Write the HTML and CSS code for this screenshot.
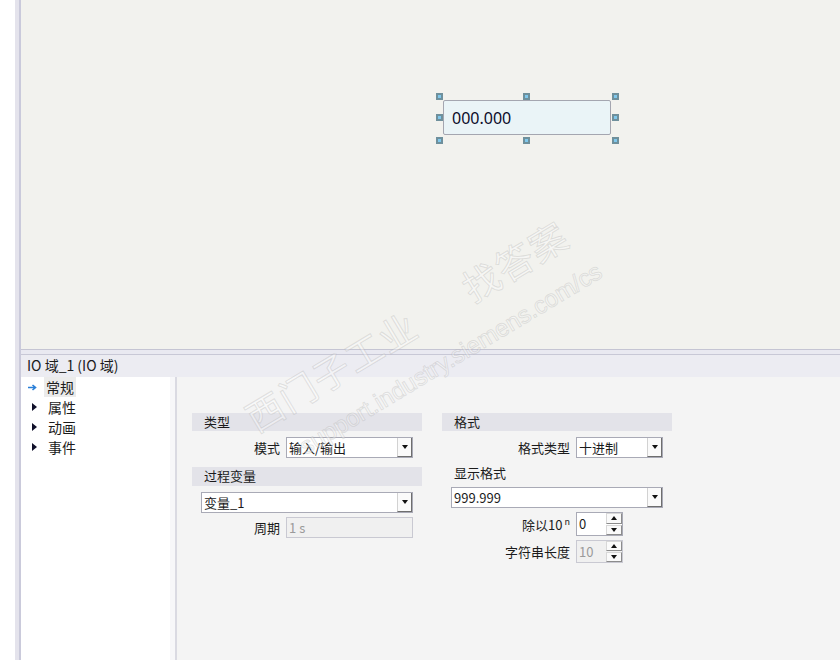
FILE: index.html
```html
<!DOCTYPE html>
<html lang="zh-CN">
<head>
    <meta charset="UTF-8">
    <title>IO 域_1</title>
    <link rel="stylesheet" href="styles.css">
</head>
<body>
    <div class="app">
        <div class="gutter"></div>
        <div class="splitter"></div>
        <div class="main">
            <div class="canvas">
                <div class="io-field">
                    <span class="io-text">000.000</span>
                    <i class="handle h-tl"></i>
                    <i class="handle h-tm"></i>
                    <i class="handle h-tr"></i>
                    <i class="handle h-ml"></i>
                    <i class="handle h-mr"></i>
                    <i class="handle h-bl"></i>
                    <i class="handle h-bm"></i>
                    <i class="handle h-br"></i>
                </div>
            </div>
            <div class="hsplit"></div>
            <div class="inspector">
                <div class="insp-title">IO 域_1 (IO 域)</div>
                <div class="insp-body">
                    <ul class="tree">
                        <li class="active">
                            <svg class="arrow" width="9" height="7" viewBox="0 0 9 7"><path d="M0 3.5H7M4.5 1L7.5 3.5L4.5 6" stroke="#2a7fd8" stroke-width="1.6" fill="none"/></svg>
                            <span class="tree-text">常规</span>
                        </li>
                        <li><span class="tri"></span><span class="tree-text">属性</span></li>
                        <li><span class="tri"></span><span class="tree-text">动画</span></li>
                        <li><span class="tri"></span><span class="tree-text">事件</span></li>
                    </ul>
                    <div class="tree-sep"></div>
                    <div class="props">
                        <div class="col col-left">
                            <div class="bar">类型</div>
                            <div class="row">
                                <span class="lbl">模式</span>
                                <div class="combo w-mode">
                                    <span class="val">输入/输出</span>
                                    <span class="dd"><b></b></span>
                                </div>
                            </div>
                            <div class="bar bar-2">过程变量</div>
                            <div class="combo wide">
                                <span class="val">变量_1</span>
                                <span class="dd"><b></b></span>
                            </div>
                            <div class="row row-tight">
                                <span class="lbl">周期</span>
                                <div class="textbox disabled w-mode">1 s</div>
                            </div>
                        </div>
                        <div class="col col-right">
                            <div class="bar">格式</div>
                            <div class="row">
                                <span class="lbl">格式类型</span>
                                <div class="combo w-fmt">
                                    <span class="val">十进制</span>
                                    <span class="dd"><b></b></span>
                                </div>
                            </div>
                            <div class="sub-label">显示格式</div>
                            <div class="combo wide">
                                <span class="val">999.999</span>
                                <span class="dd"><b></b></span>
                            </div>
                            <div class="row row-tight spin-row">
                                <span class="lbl">除以10<sup>n</sup></span>
                                <div class="spin">
                                    <span class="val">0</span>
                                    <span class="spin-btns"><span class="up"><b></b></span><span class="down"><b></b></span></span>
                                </div>
                            </div>
                            <div class="row row-tight spin-row">
                                <span class="lbl">字符串长度</span>
                                <div class="spin disabled">
                                    <span class="val">10</span>
                                    <span class="spin-btns"><span class="up"><b></b></span><span class="down"><b></b></span></span>
                                </div>
                            </div>
                        </div>
                    </div>
                </div>
            </div>
        </div>
        <div class="watermark">
            <div class="wm-cn">西门子工业<span class="wm-gap">找答案</span></div>
            <div class="wm-url">support.industry.siemens.com/cs</div>
        </div>
    </div>
</body>
</html>
```

FILE: styles.css
```css
body {
    margin: 0;
    font-family: "Noto Sans CJK SC", "Noto Sans", sans-serif;
    color: #1b1b1b;
    background-color: #fff;
    overflow: hidden;
}
.app {
    position: relative;
    display: flex;
    width: 840px;
    height: 660px;
    overflow: hidden;
}
.gutter {
    width: 15px;
    background-color: #fff;
}
.splitter {
    width: 4px;
    background-color: #e4e3ec;
    border-right: 2px solid #cacadb;
}
.main {
    flex: 1;
    display: flex;
    flex-direction: column;
}
.canvas {
    position: relative;
    height: 349px;
    background-color: #f2f2ee;
}
.io-field {
    position: absolute;
    left: 422px;
    top: 100px;
    width: 166px;
    height: 33px;
    background-color: #eaf4f7;
    border: 1px solid #a4a6b0;
    border-radius: 2px;
    display: flex;
    align-items: center;
}
.io-text {
    padding-left: 8px;
    font-family: "Noto Sans", sans-serif;
    font-size: 16px;
    color: #0c0c2a;
}
.handle {
    position: absolute;
    width: 3px;
    height: 3px;
    background-color: #80c8ec;
    border: 2px solid #6f909c;
}
.h-tl { left: -8px; top: -8px; }
.h-tm { left: 79px; top: -8px; }
.h-tr { left: 168px; top: -8px; }
.h-ml { left: -8px; top: 13px; }
.h-mr { left: 168px; top: 13px; }
.h-bl { left: -8px; top: 36px; }
.h-bm { left: 79px; top: 36px; }
.h-br { left: 168px; top: 36px; }

.hsplit {
    height: 4px;
    background-color: #e9e9f1;
    border-top: 1px solid #c5c5d3;
    border-bottom: 1px solid #c8c8d6;
}
.inspector {
    flex: 1;
    display: flex;
    flex-direction: column;
}
.insp-title {
    height: 22px;
    line-height: 21px;
    padding-left: 6px;
    background-color: #ececf2;
    font-size: 14px;
}
.insp-body {
    flex: 1;
    display: flex;
}
.tree {
    list-style: none;
    margin: 0;
    padding: 0;
    width: 149px;
    background-color: #fff;
}
.tree li {
    display: flex;
    align-items: center;
    height: 20px;
    font-size: 14px;
}
.tree .arrow {
    margin-left: 7px;
    margin-right: 7px;
}
.tree .tri {
    width: 0;
    height: 0;
    margin-left: 11px;
    margin-right: 9px;
    border-left: 5px solid #10102a;
    border-top: 4px solid transparent;
    border-bottom: 4px solid transparent;
}
.tree-text {
    padding: 0 2px;
    line-height: 20px;
}
.tree li.active .tree-text {
    background-color: #ebebeb;
}
.tree-sep {
    width: 5px;
    background-color: #f7f7f9;
    border-right: 2px solid #dadae2;
}
.props {
    flex: 1;
    display: flex;
    gap: 20px;
    padding: 36px 0 0 15px;
    background-color: #f4f4f4;
    font-size: 13px;
}
.col {
    width: 230px;
}
.bar {
    height: 18px;
    line-height: 18px;
    padding-left: 12px;
    background-color: #e3e3e9;
}
.bar-2 {
    height: 19px;
    margin-top: 9px;
}
.row {
    display: flex;
    align-items: center;
    margin-top: 6px;
}
.row-tight {
    margin-top: 4px;
}
.lbl {
    box-sizing: border-box;
    padding-right: 6px;
    text-align: right;
}
.col-left .lbl { width: 94px; }
.col-right .lbl { width: 134px; }
.lbl sup {
    font-size: 9px;
    margin-left: 2px;
    vertical-align: 5px;
}
.combo {
    box-sizing: border-box;
    display: flex;
    height: 21px;
    background-color: #fff;
    border: 1px solid #a9aab6;
}
.w-mode { width: 127px; }
.w-fmt { width: 87px; }
.combo.wide {
    width: 212px;
    margin-left: 9px;
    margin-top: 6px;
}
.combo .val {
    flex: 1;
    padding-left: 2px;
    line-height: 19px;
}
.dd {
    box-sizing: border-box;
    width: 15px;
    display: flex;
    align-items: center;
    justify-content: center;
    border-left: 1px solid #d2d2d2;
    border-right: 1px solid #6e6e6e;
    border-bottom: 1px solid #6e6e6e;
    background-color: #fafafa;
}
.dd b, .spin-btns b {
    width: 0;
    height: 0;
    border-left: 3.5px solid transparent;
    border-right: 3.5px solid transparent;
    border-top: 4px solid #111;
}
.textbox {
    box-sizing: border-box;
    height: 21px;
    line-height: 19px;
    padding-left: 2px;
    border: 1px solid #a9aab6;
    background-color: #fff;
}
.textbox.disabled {
    background-color: #f0f0f0;
    border-color: #c9c9d2;
    color: #9a9a9a;
}
.sub-label {
    margin-top: 6px;
    padding-left: 12px;
    line-height: 17px;
}
.spin {
    box-sizing: border-box;
    display: flex;
    width: 47px;
    height: 24px;
    background-color: #fff;
    border: 1px solid #a9aab6;
}
.spin-row + .spin-row .spin {
    height: 23px;
}
.spin .val {
    flex: 1;
    padding-left: 2px;
    line-height: 22px;
}
.spin.disabled {
    background-color: #f0f0f0;
    border-color: #c9c9d2;
    color: #9a9a9a;
}
.spin-btns {
    width: 16px;
    display: flex;
    flex-direction: column;
    gap: 1px;
}
.spin-btns span {
    flex: 1;
    display: flex;
    align-items: center;
    justify-content: center;
    background-color: #fafafa;
    border: 1px solid #8c8c8c;
    border-top-color: #d8d8d8;
    border-left-color: #d8d8d8;
}
.spin-btns .up b {
    border-top: 0;
    border-bottom: 4px solid #111;
}
.watermark {
    position: absolute;
    left: 237px;
    top: 401px;
    transform: rotate(-31deg);
    transform-origin: 0 0;
    pointer-events: none;
    color: rgba(255, 255, 255, 0.4);
    -webkit-text-stroke: 1px rgba(150, 150, 150, 0.25);
    white-space: nowrap;
}
.wm-cn {
    font-size: 37px;
    letter-spacing: 1.5px;
    line-height: 44px;
}
.wm-gap {
    margin-left: 60px;
}
.wm-url {
    margin-top: 16px;
    margin-left: 31px;
    font-family: "Liberation Sans", sans-serif;
    font-size: 24px;
    line-height: 28px;
}
```
